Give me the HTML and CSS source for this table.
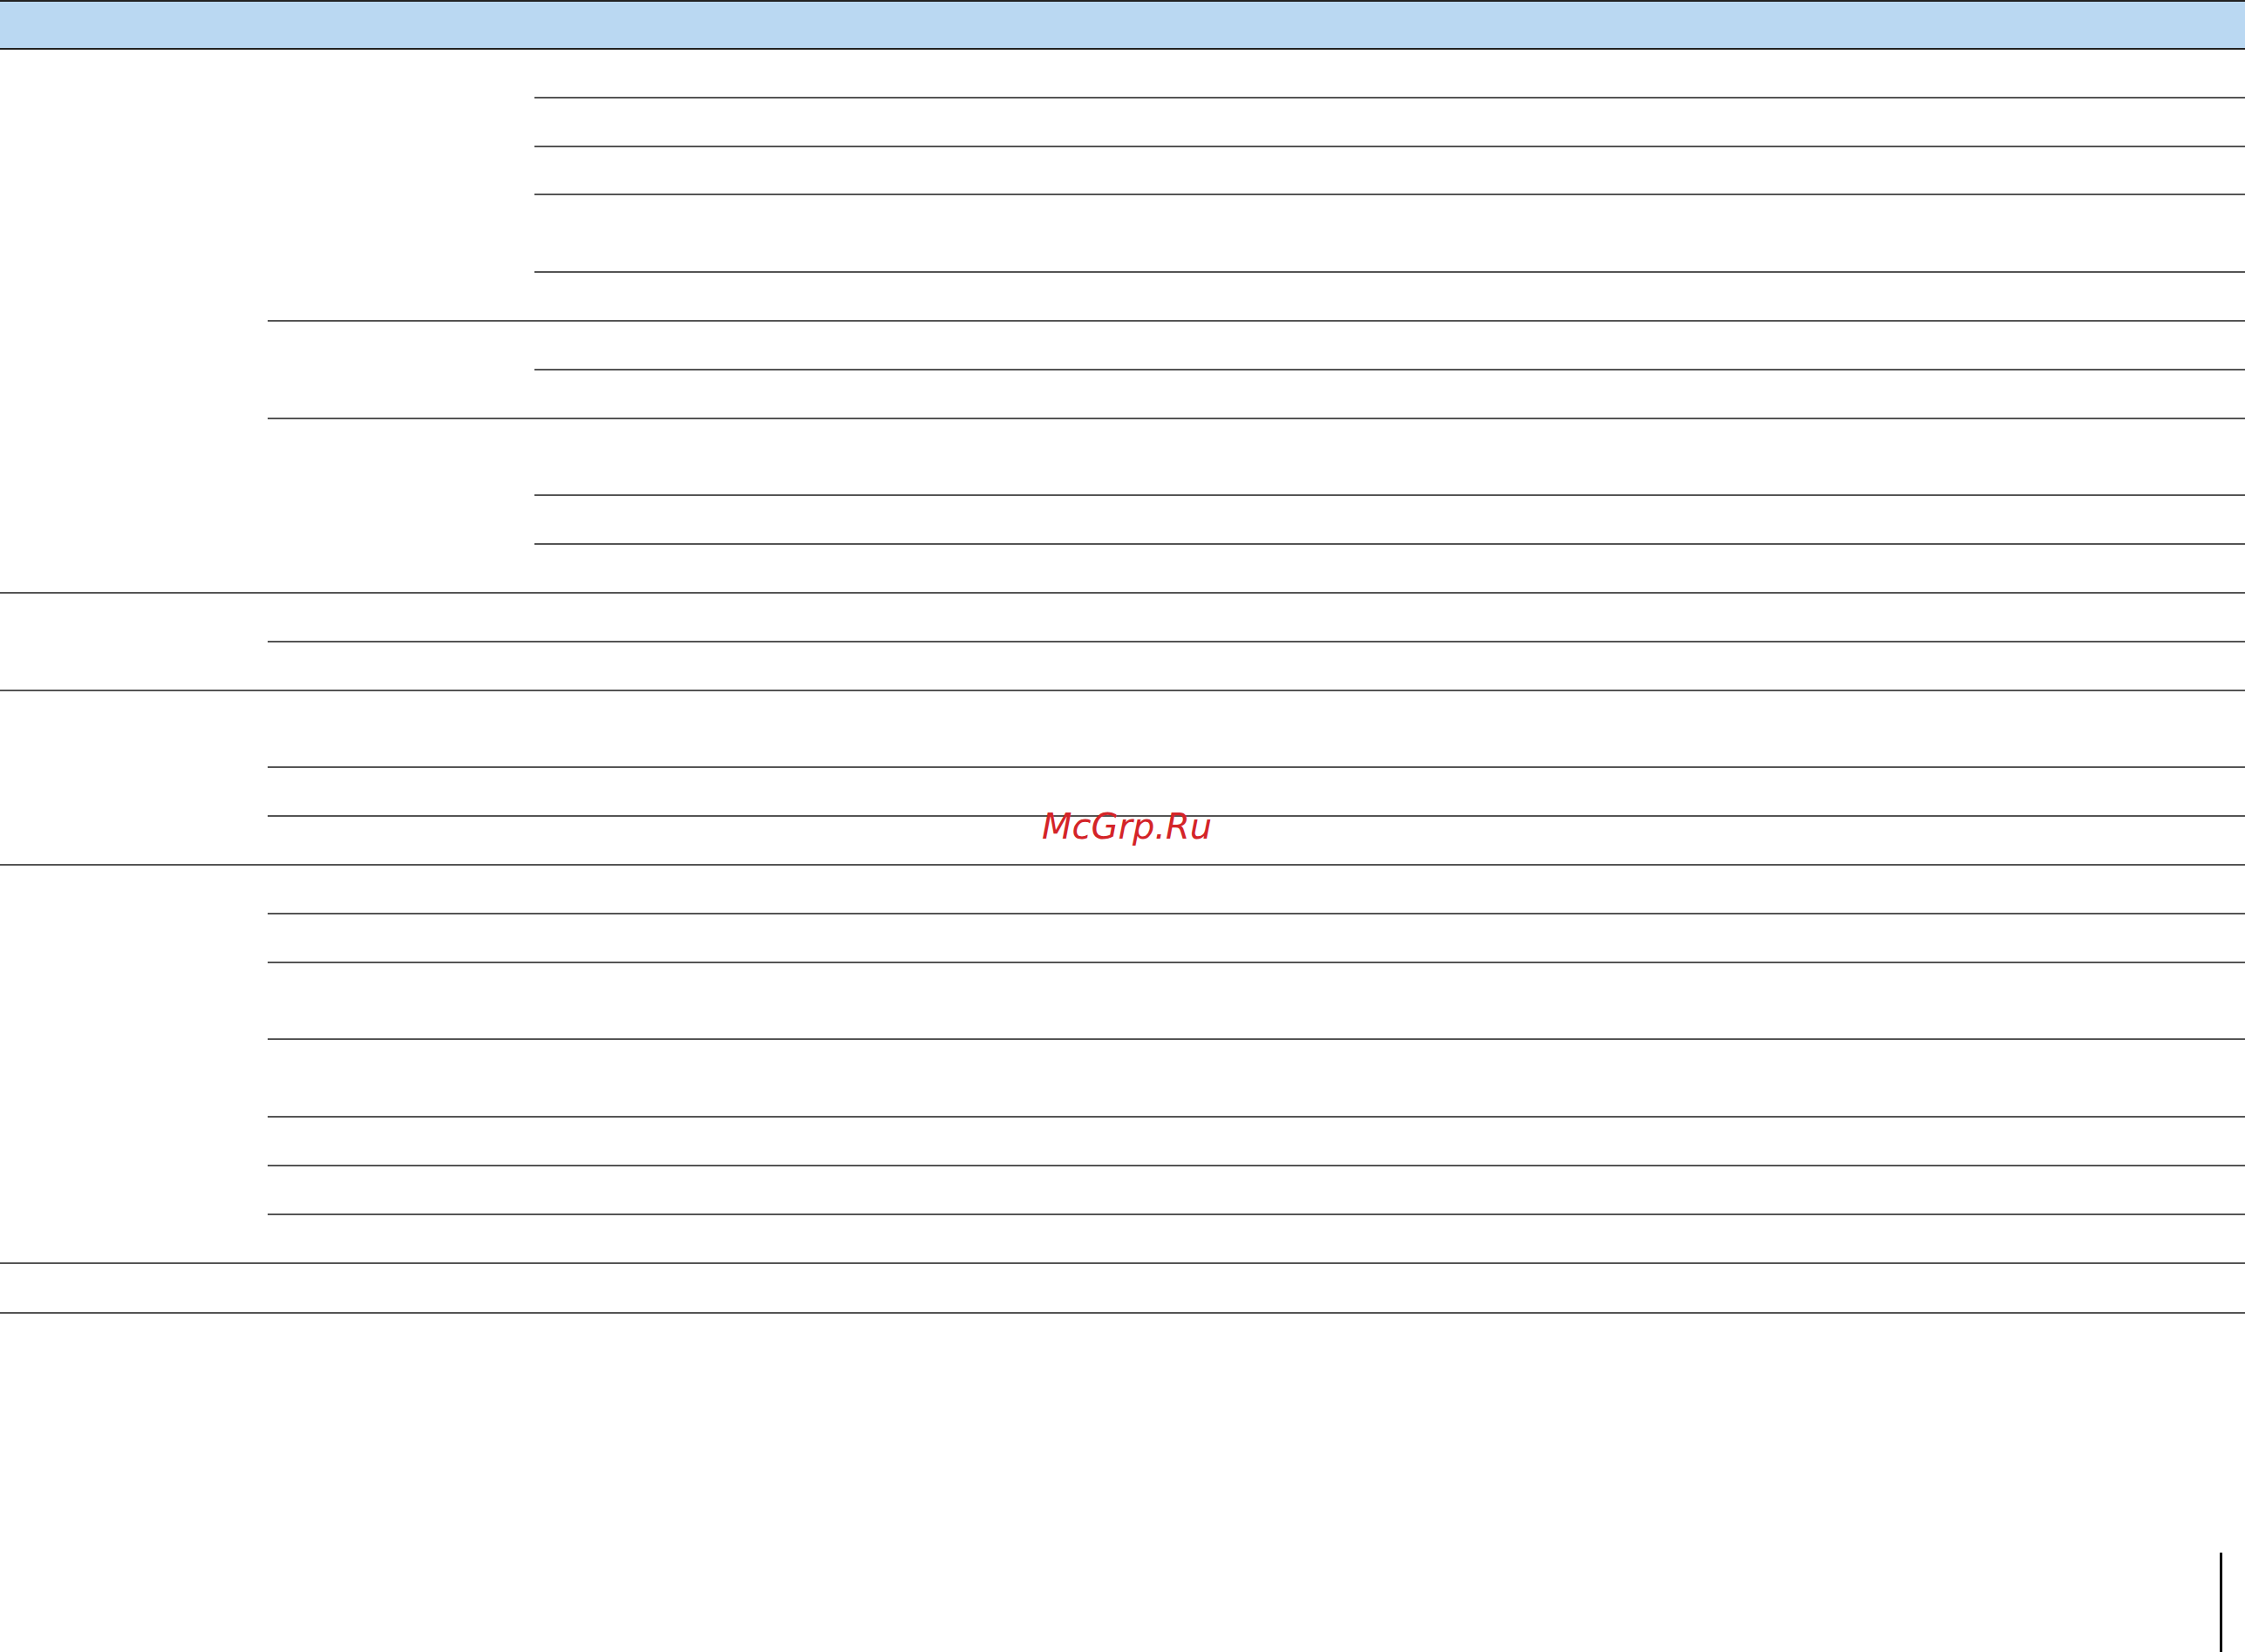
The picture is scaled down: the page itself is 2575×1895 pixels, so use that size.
FILE: index.html
```html
<!DOCTYPE html>
<html lang="ru">
<head>
<meta charset="utf-8">
<title>McGrp.Ru</title>
<link rel="stylesheet" href="styles.css">
</head>
<body>
<div class="page">
  <div class="tbl">
    <div class="head"></div>

    <div class="group">
      <div class="c1"></div>
      <div class="c23">
        <div class="sub">
          <div class="c2"></div>
          <div class="c3">
            <div class="row"></div>
            <div class="row"></div>
            <div class="row"></div>
            <div class="row dbl"></div>
            <div class="row"></div>
          </div>
        </div>
        <div class="sub">
          <div class="c2"></div>
          <div class="c3">
            <div class="row"></div>
            <div class="row"></div>
          </div>
        </div>
        <div class="sub">
          <div class="c2"></div>
          <div class="c3">
            <div class="row dbl"></div>
            <div class="row"></div>
            <div class="row"></div>
          </div>
        </div>
      </div>
    </div>

    <div class="group">
      <div class="c1"></div>
      <div class="c23">
        <div class="row"></div>
        <div class="row"></div>
      </div>
    </div>

    <div class="group">
      <div class="c1"></div>
      <div class="c23">
        <div class="row dbl"></div>
        <div class="row"></div>
        <div class="row"></div>
      </div>
    </div>

    <div class="group">
      <div class="c1"></div>
      <div class="c23">
        <div class="row"></div>
        <div class="row"></div>
        <div class="row dbl"></div>
        <div class="row dbl"></div>
        <div class="row"></div>
        <div class="row"></div>
        <div class="row"></div>
      </div>
    </div>

    <div class="group">
      <div class="row full"></div>
    </div>
  </div>

  <div class="foot">
    <div class="edge-bar"></div>
  </div>

  <div class="watermark">McGrp.Ru</div>
</div>
</body>
</html>
```

FILE: styles.css
```css
html, body {
  margin: 0;
  padding: 0;
  background: #ffffff;
}

body {
  font-family: "DejaVu Sans", "Liberation Sans", sans-serif;
}

.page {
  position: relative;
  width: 2575px;
  height: 1895px;
  overflow: hidden;
}

.tbl {
  display: flex;
  flex-direction: column;
  width: 2575px;
}

.head {
  box-sizing: border-box;
  height: 57px;
  background: #bad8f2;
  border-top: 2px solid #222;
  border-bottom: 2px solid #222;
}

.group {
  box-sizing: border-box;
  display: flex;
  border-bottom: 2px solid #555;
}

.c1 {
  width: 307px;
  flex: none;
}

.c23 {
  flex: 1;
  display: flex;
  flex-direction: column;
}

.sub {
  display: flex;
  border-bottom: 2px solid #555;
}

.sub:last-child {
  border-bottom: none;
}

.c2 {
  width: 306px;
  flex: none;
}

.c3 {
  flex: 1;
  display: flex;
  flex-direction: column;
}

.row {
  box-sizing: border-box;
  height: 55.8px;
  border-bottom: 2px solid #555;
}

.row.dbl {
  height: 88.8px;
}

.row:last-child {
  border-bottom: none;
  height: 53.8px;
}

.row.dbl:last-child {
  height: 86.8px;
}

.row.full {
  flex: 1;
  height: 55px;
}

.foot {
  display: flex;
  justify-content: flex-end;
  padding-right: 26px;
  margin-top: 274px;
}

.edge-bar {
  width: 3px;
  height: 116px;
  background: #000;
}

.watermark {
  position: absolute;
  left: 1195px;
  top: 928px;
  font-family: "DejaVu Sans", sans-serif;
  font-style: italic;
  font-size: 40px;
  line-height: 1;
  color: #d42428;
  white-space: nowrap;
}
```
